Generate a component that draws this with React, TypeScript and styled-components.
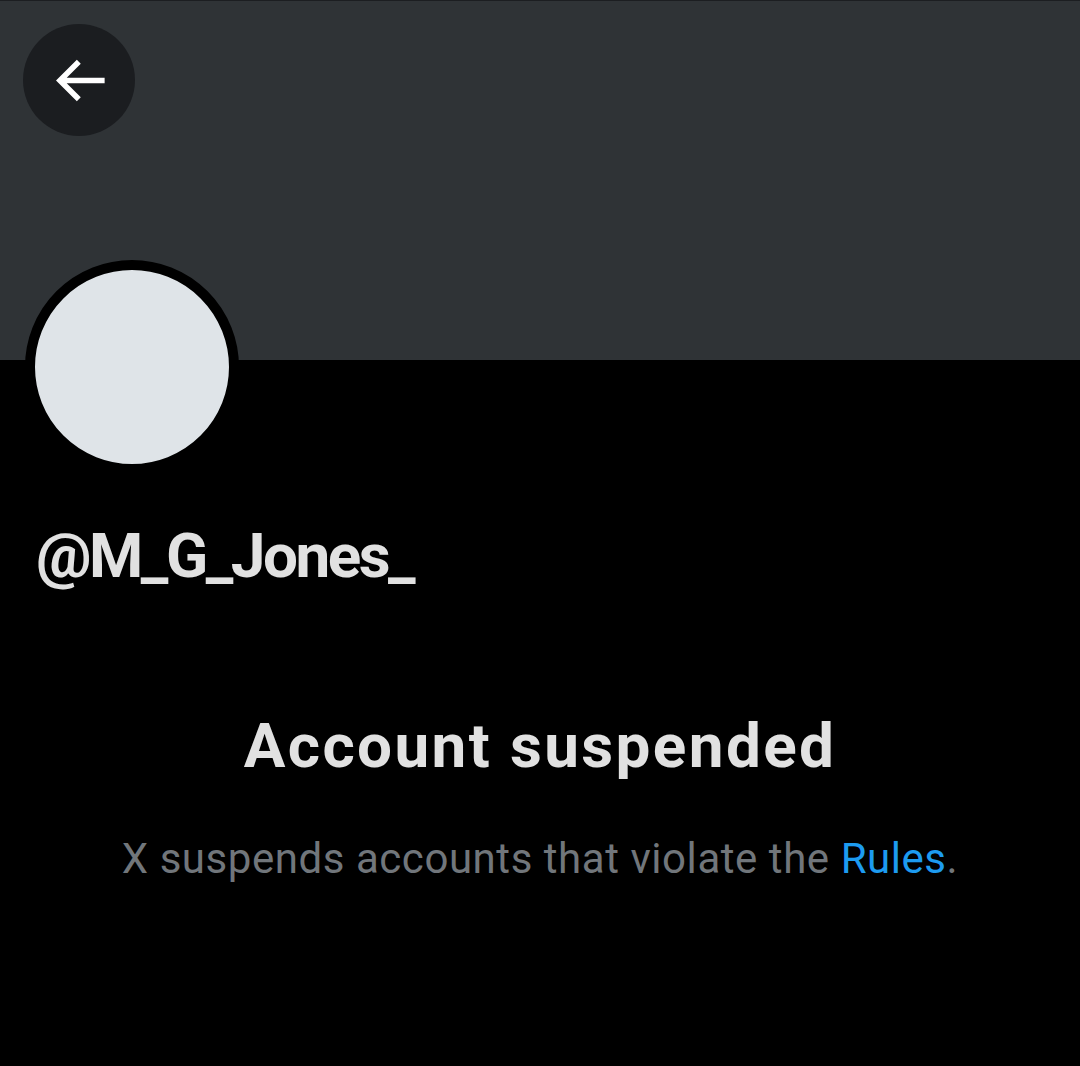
import React from "react";
import styled, { createGlobalStyle } from "styled-components";

const Global = createGlobalStyle`
  html, body { margin: 0; padding: 0; background: #000; }
  body { font-family: Roboto, "Liberation Sans", sans-serif; }
`;

const Page = styled.div`
  width: 1080px;
  min-height: 1066px;
  background: #000;
  display: flex;
  flex-direction: column;
`;

const Banner = styled.div`
  height: 360px;
  box-sizing: border-box;
  background: #2f3336;
  border-top: 1px solid #1c1e21;
  padding: 23px 0 0 23px;
`;

const BackButton = styled.button`
  width: 112px;
  height: 112px;
  border-radius: 50%;
  border: none;
  padding: 0;
  background: #1b1d20;
  display: flex;
  align-items: center;
  justify-content: center;
  cursor: pointer;
`;

const Avatar = styled.div`
  margin: -100px 0 0 25px;
  width: 194px;
  height: 194px;
  border-radius: 50%;
  border: 10px solid #000;
  background: #dfe4e8;
`;

const Handle = styled.div`
  margin: 45px 0 0 36px;
  font-size: 62px;
  line-height: 1.2;
  font-weight: 700;
  letter-spacing: -2.5px;
  color: #e1e1e1;
`;

const Title = styled.h1`
  margin: 116px 0 0 0;
  text-align: center;
  font-size: 62px;
  line-height: 1.2;
  font-weight: 700;
  letter-spacing: 2.4px;
  color: #e1e1e1;
`;

const Subtitle = styled.p`
  margin: 50px 0 0 0;
  text-align: center;
  font-size: 42px;
  line-height: 1.2;
  font-weight: 400;
  letter-spacing: 0.55px;
  color: #71767b;
`;

const Link = styled.a`
  color: #1d9bf0;
  text-decoration: none;
`;

const ArrowIcon = () => (
  <svg width="67" height="67" viewBox="0 0 24 24" aria-hidden="true">
    <path
      fill="#ffffff"
      d="M7.414 13l5.043 5.04-1.414 1.42L3.586 12l7.457-7.46 1.414 1.42L7.414 11H21v2H7.414z"
    />
  </svg>
);

export default function App() {
  return (
    <>
      <Global />
      <Page>
        <Banner>
          <BackButton aria-label="Back">
            <ArrowIcon />
          </BackButton>
        </Banner>
        <Avatar />
        <Handle>@M_G_Jones_</Handle>
        <Title>Account suspended</Title>
        <Subtitle>
          X suspends accounts that violate the <Link href="#">Rules</Link>.
        </Subtitle>
      </Page>
    </>
  );
}
